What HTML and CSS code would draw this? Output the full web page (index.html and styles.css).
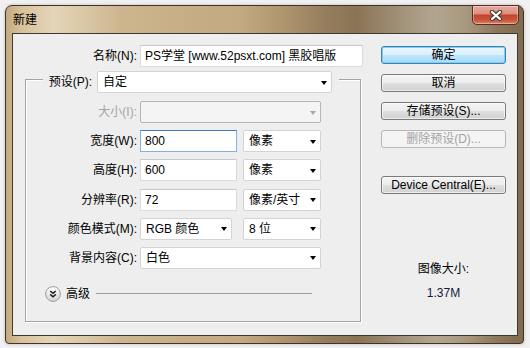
FILE: index.html
```html
<!DOCTYPE html>
<html lang="zh">
<head>
<meta charset="utf-8">
<title>新建</title>
<link rel="stylesheet" href="styles.css">
</head>
<body>
<div class="window">
  <div class="titlebar">
    <span class="title">新建</span>
    <div class="close">
      <svg width="14" height="11" viewBox="0 0 14 11">
        <path d="M3 2 L11 9 M11 2 L3 9" stroke="#4b4040" stroke-width="4.4" stroke-linecap="round" fill="none"/>
        <path d="M3 2 L11 9 M11 2 L3 9" stroke="#ffffff" stroke-width="2.2" stroke-linecap="round" fill="none"/>
      </svg>
    </div>
  </div>
  <div class="content">
    <div class="main">
      <div class="row name-row">
        <span class="lbl name-lbl">名称(N):</span>
        <div class="field name-field">PS学堂 [www.52psxt.com] 黑胶唱版</div>
      </div>
      <div class="group">
        <div class="preset-row">
          <span class="lbl preset-lbl">预设(P):</span>
          <div class="select preset"><span>自定</span><i class="arrow"></i></div>
        </div>
        <div class="rows">
          <div class="row">
            <span class="lbl disabled">大小(I):</span>
            <div class="select wide disabled-select"><span></span><i class="arrow"></i></div>
          </div>
          <div class="row">
            <span class="lbl">宽度(W):</span>
            <div class="field num focus">800</div>
            <div class="select unit"><span>像素</span><i class="arrow"></i></div>
          </div>
          <div class="row">
            <span class="lbl">高度(H):</span>
            <div class="field num">600</div>
            <div class="select unit"><span>像素</span><i class="arrow"></i></div>
          </div>
          <div class="row">
            <span class="lbl">分辨率(R):</span>
            <div class="field num">72</div>
            <div class="select unit"><span>像素/英寸</span><i class="arrow"></i></div>
          </div>
          <div class="row">
            <span class="lbl">颜色模式(M):</span>
            <div class="select mode"><span>RGB 颜色</span><i class="arrow"></i></div>
            <div class="select unit"><span>8 位</span><i class="arrow"></i></div>
          </div>
          <div class="row">
            <span class="lbl">背景内容(C):</span>
            <div class="select wide"><span>白色</span><i class="arrow"></i></div>
          </div>
        </div>
        <div class="advanced">
          <svg class="adv-icon" width="16" height="16" viewBox="0 0 16 16">
            <defs>
              <linearGradient id="ag" x1="0" y1="0" x2="0" y2="1">
                <stop offset="0" stop-color="#ffffff"/>
                <stop offset="1" stop-color="#d4d4d4"/>
              </linearGradient>
            </defs>
            <circle cx="8" cy="8" r="7.4" fill="url(#ag)" stroke="#9b9b9b" stroke-width="1"/>
            <path d="M5.2 5 L8 7.4 L10.8 5 M5.2 8.4 L8 10.8 L10.8 8.4" stroke="#1e1e1e" stroke-width="1.4" fill="none"/>
          </svg>
          <span class="adv-text">高级</span>
          <span class="adv-line"></span>
        </div>
      </div>
    </div>
    <div class="side">
      <div class="btn default">确定</div>
      <div class="btn">取消</div>
      <div class="btn">存储预设(S)...</div>
      <div class="btn disabled-btn">删除预设(D)...</div>
      <div class="btn dc">Device Central(E)...</div>
      <div class="info-label">图像大小:</div>
      <div class="info-value">1.37M</div>
    </div>
  </div>
</div>
</body>
</html>
```
FILE: styles.css
```css
* { box-sizing: border-box; }

html, body {
  margin: 0;
  width: 530px;
  height: 348px;
  overflow: hidden;
}

body {
  background: #f0f0f0;
  padding: 5px 0 0 5px;
  font-family: "Liberation Sans", "Noto Sans CJK SC", sans-serif;
  font-size: 12px;
  line-height: 16px;
  color: #000;
}

.window {
  width: 519px;
  height: 339px;
  border: 1px solid #3f3427;
  border-radius: 7px 7px 4px 4px;
  background: linear-gradient(to right,
    #c4a97f 0%, #d8c29c 3%, #e4d4b8 9%, #dccaa9 14%, #cdb68f 22%,
    #c6ad85 35%, #c3aa82 45%, #ae946d 54%, #947d5c 62%, #8a7455 68%,
    #a09078 76%, #b2a590 83%, #a8987f 89%, #8d785b 95%, #806b4f 100%);
  padding: 0 5px 7px 6px;
  display: flex;
  flex-direction: column;
  box-shadow: 0 0 3px rgba(0,0,0,0.25);
}

.titlebar {
  height: 27px;
  display: flex;
  justify-content: space-between;
  align-items: flex-start;
}

.title {
  margin-top: 5px;
  padding-left: 1px;
  font-family: "Noto Sans CJK SC", sans-serif;
  font-size: 12px;
  line-height: 16px;
  color: #000;
}

.close {
  width: 47px;
  height: 20px;
  margin-top: -1px;
  margin-right: -1px;
  border: 1px solid #5c2b22;
  border-radius: 0 0 5px 5px;
  background: linear-gradient(#e8ab9c 0%, #dc8f7e 42%, #c2452d 52%, #c9573a 78%, #dc8366 100%);
  box-shadow: inset 0 0 0 1px rgba(255,255,255,0.35);
  display: flex;
  align-items: center;
  justify-content: center;
}

.content {
  width: 506px;
  height: 303px;
  border: 1px solid #3d3831;
  background: #eeeeee;
  display: flex;
  padding: 11px 0 0 12px;
}

.main {
  width: 338px;
  display: flex;
  flex-direction: column;
}

.row {
  display: flex;
  align-items: center;
  height: 22px;
}

.lbl {
  text-align: right;
  white-space: nowrap;
}

.name-lbl { width: 112px; }

.field {
  height: 22px;
  background: #fff;
  border: 1px solid #d9dbe0;
  border-top-color: #c4c7cc;
  padding: 0 4px;
  display: flex;
  align-items: center;
  white-space: nowrap;
  overflow: hidden;
}

.name-field {
  margin-left: 3px;
  width: 223px;
}

.group {
  margin-top: 12px;
  width: 336px;
  border: 1px solid #a3a3a3;
  box-shadow: inset 1px 1px 0 #fff, 1px 1px 0 #fff;
  padding-bottom: 19px;
}

.preset-row {
  display: flex;
  align-items: center;
  width: 296px;
  height: 22px;
  margin: -9px 0 0 17px;
  padding: 0 7px 0 2px;
  background: #eeeeee;
}

.preset-lbl { width: 47px; }

.select {
  height: 22px;
  background: #fff;
  border: 1px solid #d3d3d3;
  border-radius: 2px;
  padding: 0 4px 0 5px;
  display: flex;
  align-items: center;
  justify-content: space-between;
  white-space: nowrap;
}

.arrow {
  width: 0;
  height: 0;
  border-left: 3.5px solid transparent;
  border-right: 3.5px solid transparent;
  border-top: 4px solid #000;
  margin-top: 1px;
}

.preset {
  margin-left: 5px;
  width: 235px;
}

.rows {
  margin-top: 8px;
  display: flex;
  flex-direction: column;
  gap: 7.2px;
}

.rows .lbl { width: 111px; }

.rows .lbl + .field,
.rows .lbl + .select { margin-left: 3px; }

.wide { width: 181px; }
.num { width: 97px; }
.unit { width: 78px; margin-left: 6px; }
.mode { width: 92px; }
.mode + .unit { margin-left: 11px; }

.focus {
  border-color: #7eb2e6;
  border-top-color: #3d7bbd;
}

.disabled { color: #a3a3a3; }

.disabled-select {
  background: #f4f4f4;
  border-color: #b5b5b5;
}
.disabled-select .arrow { border-top-color: #a8a8a8; }

.advanced {
  margin: 17px 0 0 19px;
  display: flex;
  align-items: center;
  height: 16px;
}

.adv-icon { display: block; }

.adv-text { margin-left: 5px; }

.adv-line {
  margin-left: 6px;
  width: 216px;
  height: 1px;
  background: #a0a0a0;
}

.side {
  margin-left: 18px;
  width: 125px;
  padding-top: 1px;
  display: flex;
  flex-direction: column;
}

.btn {
  height: 18px;
  border: 1px solid #7a7a7a;
  border-radius: 3px;
  background: linear-gradient(#f4f4f4 0%, #ececec 48%, #dedede 52%, #d2d2d2 100%);
  box-shadow: inset 0 0 0 1px rgba(255,255,255,0.6);
  display: flex;
  align-items: center;
  justify-content: center;
  white-space: nowrap;
}

.btn + .btn { margin-top: 10px; }

.btn.default {
  border-color: #3c7fb1;
  background: linear-gradient(#eaf6fd 0%, #d9f0fc 48%, #bee6fd 52%, #a7d9f5 100%);
  box-shadow: inset 0 0 0 1px #7fd0f5;
}

.btn.disabled-btn {
  border-color: #b3b6b8;
  background: #f4f4f4;
  box-shadow: none;
  color: #a3a3a3;
}

.btn.dc { margin-top: 28px; }

.info-label {
  margin-top: 67px;
  text-align: center;
}

.info-value {
  margin-top: 8px;
  text-align: center;
  color: #141a3c;
}
```
